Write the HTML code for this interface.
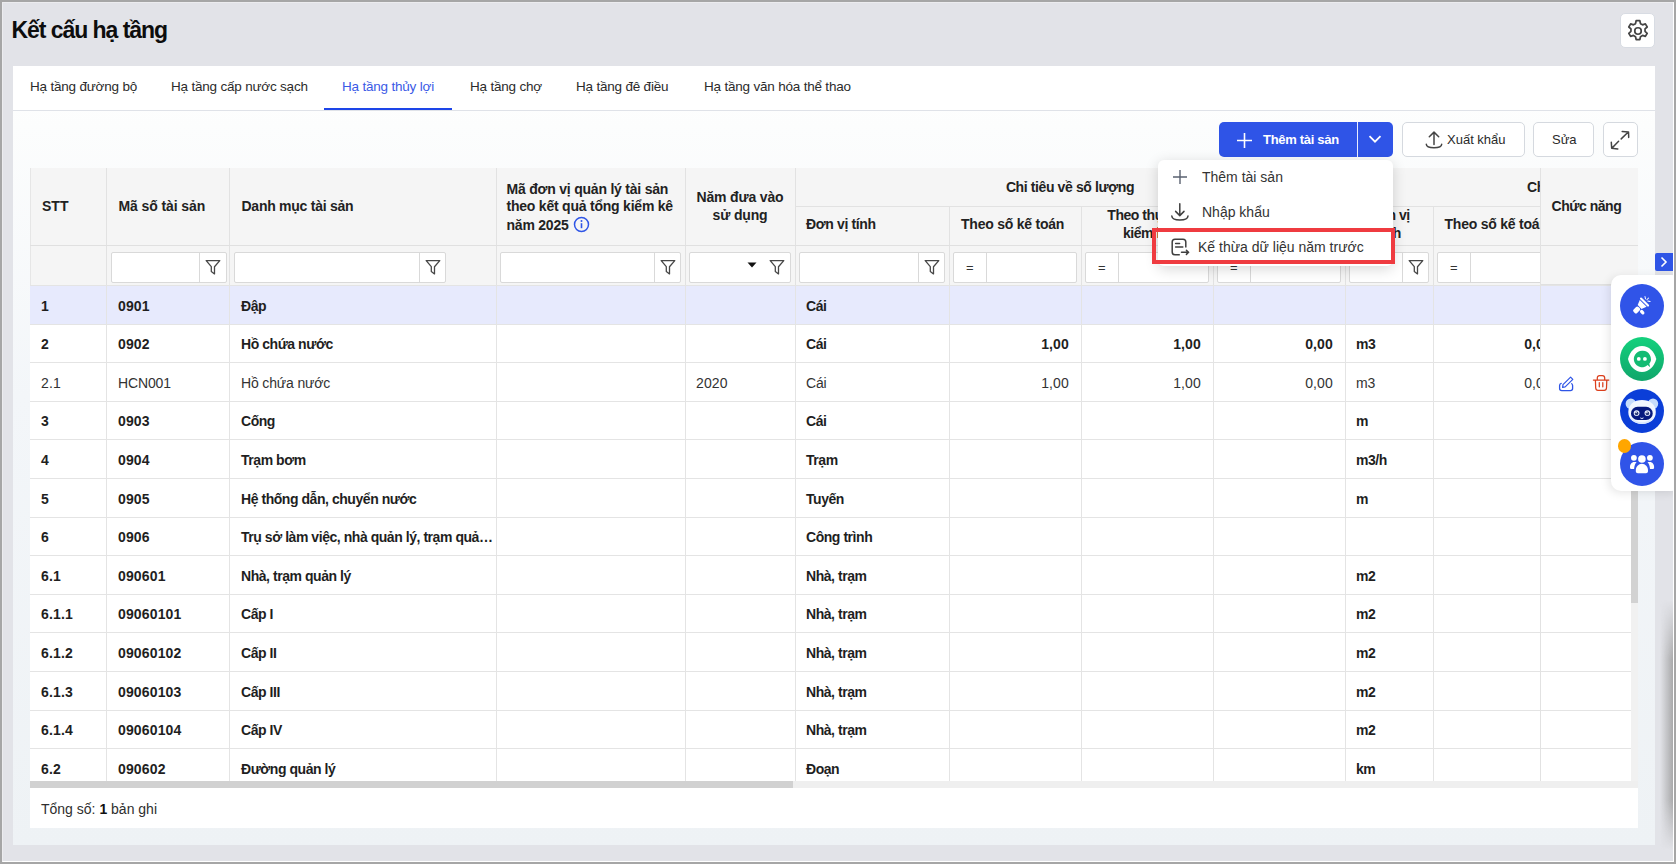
<!DOCTYPE html>
<html><head><meta charset="utf-8"><style>
*{box-sizing:border-box}
html,body{margin:0;padding:0}
body{width:1676px;height:864px;overflow:hidden;position:relative;background:#e2e3e8;font-family:"Liberation Sans",sans-serif;color:#222}
.a{position:absolute}
.ic{position:absolute;display:block}
.t{position:absolute;white-space:nowrap}
.frame{position:absolute;left:0;top:0;width:1676px;height:864px;border:2px solid #a6a6a6;pointer-events:none;z-index:50}
.frame:after{content:"";position:absolute;left:0;top:0;right:0;bottom:0;border-right:1px solid #fff;border-bottom:1px solid #fff;border-left:1px solid #ececef;border-top:1px solid #ececef}
.card{position:absolute;left:13px;top:66px;width:1642px;height:779px;background:linear-gradient(180deg,#fff 0px,#fcfdfd 60px,#f3f6f9 330px,#eef2f5 100%)}
.tabbar{position:absolute;left:0;top:0;width:1642px;height:45px;background:#fff;border-bottom:1px solid #dfe2e8}
.tab{position:absolute;top:0;height:44px;line-height:44px;font-size:13.5px;letter-spacing:-0.2px;color:#2b2b2b;white-space:nowrap}
.btn{position:absolute;top:122px;height:35px;border:1px solid #d5d9df;border-radius:5px;background:#fff;font-size:13px;color:#2a2a2a;line-height:33px;white-space:nowrap}
.hd{position:absolute;background:#f5f5f5;border-right:1px solid #e2e2e2;border-bottom:1px solid #e2e2e2}
.hdt{position:absolute;font-size:14px;font-weight:bold;letter-spacing:-0.45px;color:#222;line-height:17.8px;margin-top:0.5px}
.cell{position:absolute;font-size:14px;line-height:38.6px;white-space:nowrap;overflow:hidden;padding:1.5px 12px 0 11px}
.b{font-weight:bold;letter-spacing:-0.45px;color:#1f1f1f}
.num{letter-spacing:0.15px !important}
.n{font-weight:normal;color:#333;font-size:14px;letter-spacing:-0.15px}
.inp{position:absolute;top:252px;height:31px;background:#fff;border:1px solid #d9d9d9;border-radius:2px}
.menu{position:absolute;left:1158px;top:160px;width:235px;height:106px;background:#fff;border-radius:6px;box-shadow:0 3px 14px rgba(0,0,0,.16);z-index:20}
.mi{position:absolute;font-size:14px;color:#333;white-space:nowrap}
</style></head><body>

<div class="t" style="left:11.5px;top:17px;font-size:23px;line-height:26px;font-weight:bold;color:#0d0d0d;letter-spacing:-1.05px">Kết cấu hạ tầng</div>
<div class="a" style="left:1620px;top:13px;width:35px;height:35px;background:#fff;border:1px solid #d8dce3;border-radius:5px"></div>
<svg class="ic" style="left:1624.6px;top:18.2px" width="26" height="26" viewBox="0 0 24 24"><path fill="none" stroke="#444" stroke-width="1.6" stroke-linejoin="round" d="M10.3 2.5h3.4l.6 2.7 1.9 1.1 2.6-.9 1.7 2.9-2 1.8v2.2l2 1.8-1.7 2.9-2.6-.9-1.9 1.1-.6 2.7h-3.4l-.6-2.7-1.9-1.1-2.6.9-1.7-2.9 2-1.8v-2.2l-2-1.8 1.7-2.9 2.6.9 1.9-1.1z"/><circle cx="12" cy="12" r="3" fill="none" stroke="#444" stroke-width="1.6"/></svg>
<div class="card">
<div class="tabbar">
<div class="tab" style="left:17px;top:-1px;color:#2b2b2b">Hạ tầng đường bộ</div>
<div class="tab" style="left:158px;top:-1px;color:#2b2b2b">Hạ tầng cấp nước sạch</div>
<div class="tab" style="left:329px;top:-1px;color:#3a5ae6">Hạ tầng thủy lợi</div>
<div class="tab" style="left:457px;top:-1px;color:#2b2b2b">Hạ tầng chợ</div>
<div class="tab" style="left:563px;top:-1px;color:#2b2b2b">Hạ tầng đê điều</div>
<div class="tab" style="left:691px;top:-1px;color:#2b2b2b">Hạ tầng văn hóa thể thao</div>
<div class="a" style="left:311px;top:42px;width:128px;height:2px;background:#1d45e8"></div>
</div>
</div>
<div class="a" style="left:1219px;top:122px;width:174px;height:35px;background:#2f54e7;border-radius:5px"></div>
<div class="a" style="left:1357px;top:122px;width:1px;height:35px;background:#e8ecff"></div>
<svg class="ic" style="left:1236px;top:132px" width="17" height="17" viewBox="0 0 17 17"><path d="M8.5 1v15M1 8.5h15" stroke="#fff" stroke-width="1.6"/></svg>
<div class="t" style="left:1263px;top:122px;line-height:35px;font-size:13px;font-weight:bold;color:#fff;letter-spacing:-0.3px">Thêm tài sản</div>
<svg class="ic" style="left:1368px;top:134px" width="14" height="10" viewBox="0 0 14 10"><path d="M1.5 2.2l5.5 5.5 5.5-5.5" fill="none" stroke="#fff" stroke-width="1.8"/></svg>
<div class="btn" style="left:1402px;width:123px"></div>
<svg class="ic" style="left:1425px;top:131px" width="18" height="18" viewBox="0 0 18 18"><path d="M9 1.3v12.2M4.3 5.7L9 1.1l4.7 4.6" fill="none" stroke="#454545" stroke-width="1.5" stroke-linecap="round" stroke-linejoin="round"/><path d="M1.3 13.2C1.4 15.9 3.4 16.7 9 16.7S16.6 15.9 16.7 13.2" fill="none" stroke="#454545" stroke-width="1.5" stroke-linecap="round"/></svg>
<div class="t" style="left:1447px;top:122px;line-height:35px;font-size:13px;color:#2a2a2a">Xuất khẩu</div>
<div class="btn" style="left:1533px;width:61px"></div>
<div class="t" style="left:1552px;top:122px;line-height:35px;font-size:13px;color:#2a2a2a">Sửa</div>
<div class="btn" style="left:1603px;width:35px"></div>
<svg class="ic" style="left:1610px;top:130px" width="20" height="20" viewBox="0 0 20 20"><path d="M12.2 1.5L18.5 1.9L18.7 7.4M18 2.3L11.2 8.9M1.3 12.2L1.7 18.3L7.8 18.9M2.3 17.7L8.6 11.3" fill="none" stroke="#444" stroke-width="1.5" stroke-linecap="round" stroke-linejoin="round"/></svg>
<div class="a" style="left:30px;top:168px;width:1608px;height:620px;overflow:hidden;background:#fff">
<div class="a" style="left:0;top:0;width:1608px;height:117px;background:#f5f5f5"></div>
<div class="a" style="left:0;top:0;width:1px;height:117px;background:#e6e6e6"></div>
<div class="a" style="left:76px;top:0;width:1px;height:117px;background:#e2e2e2"></div>
<div class="a" style="left:199px;top:0;width:1px;height:117px;background:#e2e2e2"></div>
<div class="a" style="left:466px;top:0;width:1px;height:117px;background:#e2e2e2"></div>
<div class="a" style="left:655px;top:0;width:1px;height:117px;background:#e2e2e2"></div>
<div class="a" style="left:765px;top:0;width:1px;height:117px;background:#e2e2e2"></div>
<div class="a" style="left:919px;top:38px;width:1px;height:39px;background:#e2e2e2"></div>
<div class="a" style="left:1051px;top:38px;width:1px;height:39px;background:#e2e2e2"></div>
<div class="a" style="left:1183px;top:38px;width:1px;height:39px;background:#e2e2e2"></div>
<div class="a" style="left:1403px;top:38px;width:1px;height:39px;background:#e2e2e2"></div>
<div class="a" style="left:1534px;top:38px;width:1px;height:39px;background:#e2e2e2"></div>
<div class="a" style="left:919px;top:77px;width:1px;height:40px;background:#e2e2e2"></div>
<div class="a" style="left:1051px;top:77px;width:1px;height:40px;background:#e2e2e2"></div>
<div class="a" style="left:1183px;top:77px;width:1px;height:40px;background:#e2e2e2"></div>
<div class="a" style="left:1315px;top:77px;width:1px;height:40px;background:#e2e2e2"></div>
<div class="a" style="left:1403px;top:77px;width:1px;height:40px;background:#e2e2e2"></div>
<div class="a" style="left:1534px;top:77px;width:1px;height:40px;background:#e2e2e2"></div>
<div class="a" style="left:1315px;top:0;width:1px;height:38px;background:#e2e2e2"></div>
<div class="a" style="left:765px;top:38px;width:843px;height:1px;background:#e2e2e2"></div>
<div class="a" style="left:0;top:77px;width:1608px;height:1px;background:#e0e0e0"></div>
<div class="a" style="left:0;top:117px;width:1608px;height:1px;background:#e4e4e4"></div>
<div class="hdt" style="left:12px;top:29.5px;letter-spacing:0">STT</div>
<div class="hdt" style="left:88.5px;top:29.5px;letter-spacing:-0.1px">Mã số tài sản</div>
<div class="hdt" style="left:211.5px;top:29.5px;letter-spacing:-0.26px">Danh mục tài sản</div>
<div class="hdt" style="left:476.5px;top:12px;letter-spacing:-0.22px">Mã đơn vị quản lý tài sản<br>theo kết quả tổng kiểm kê<br>năm 2025 <svg style="vertical-align:-3.5px;margin-left:1px" width="17" height="17" viewBox="0 0 17 17"><circle cx="8.5" cy="8.5" r="7" fill="none" stroke="#2f55e6" stroke-width="1.5"/><path d="M8.5 7.2v5" stroke="#2f55e6" stroke-width="1.6"/><circle cx="8.5" cy="4.9" r="1" fill="#2f55e6"/></svg></div>
<div class="hdt" style="left:655px;width:110px;text-align:center;top:20.5px;letter-spacing:-0.16px">Năm đưa vào<br>sử dụng</div>
<div class="hdt" style="left:765px;width:550px;text-align:center;top:10px;letter-spacing:-0.39px">Chỉ tiêu về số lượng</div>
<div class="hdt" style="left:776px;top:47.5px;letter-spacing:-0.37px">Đơn vị tính</div>
<div class="hdt" style="left:931px;top:47.5px;letter-spacing:-0.23px">Theo số kế toán</div>
<div class="hdt" style="left:1051px;width:132px;text-align:center;top:38.5px">Theo thực tế<br>kiểm kê</div>
<div class="hdt" style="left:1183px;width:132px;text-align:center;top:47.5px">Chênh lệch</div>
<div class="hdt" style="left:1315px;width:88px;text-align:center;top:38.5px">Đơn vị<br>tính</div>
<div class="hdt" style="left:1414.5px;top:47.5px;letter-spacing:-0.23px">Theo số kế toán</div>
<div class="hdt" style="left:1497px;top:10px">Chỉ tiêu về giá trị</div>
<div class="inp" style="left:81px;top:84px;width:116px"></div><div class="a" style="left:169px;top:84px;width:1px;height:31px;background:#d9d9d9"></div><svg class="ic" style="left:174.5px;top:91.19999999999999px" width="16" height="16" viewBox="0 0 16 16"><path d="M1.2 1.6h13.6l-5.3 6.1v7.2l-3.2-2.4V7.7z" fill="none" stroke="#474747" stroke-width="1.3" stroke-linejoin="round"/></svg>
<div class="inp" style="left:204px;top:84px;width:212px"></div><div class="a" style="left:389px;top:84px;width:1px;height:31px;background:#d9d9d9"></div><svg class="ic" style="left:394.5px;top:91.19999999999999px" width="16" height="16" viewBox="0 0 16 16"><path d="M1.2 1.6h13.6l-5.3 6.1v7.2l-3.2-2.4V7.7z" fill="none" stroke="#474747" stroke-width="1.3" stroke-linejoin="round"/></svg>
<div class="inp" style="left:470px;top:84px;width:181px"></div><div class="a" style="left:624px;top:84px;width:1px;height:31px;background:#d9d9d9"></div><svg class="ic" style="left:629.5px;top:91.19999999999999px" width="16" height="16" viewBox="0 0 16 16"><path d="M1.2 1.6h13.6l-5.3 6.1v7.2l-3.2-2.4V7.7z" fill="none" stroke="#474747" stroke-width="1.3" stroke-linejoin="round"/></svg>
<div class="inp" style="left:659px;top:84px;width:102px"></div><svg class="ic" style="left:738.5px;top:91.19999999999999px" width="16" height="16" viewBox="0 0 16 16"><path d="M1.2 1.6h13.6l-5.3 6.1v7.2l-3.2-2.4V7.7z" fill="none" stroke="#474747" stroke-width="1.3" stroke-linejoin="round"/></svg><svg class="ic" style="left:717px;top:94px" width="10" height="6" viewBox="0 0 10 6"><path d="M0.5 0.5h9L5 5.5z" fill="#111"/></svg>
<div class="inp" style="left:769px;top:84px;width:146px"></div><div class="a" style="left:888px;top:84px;width:1px;height:31px;background:#d9d9d9"></div><svg class="ic" style="left:893.5px;top:91.19999999999999px" width="16" height="16" viewBox="0 0 16 16"><path d="M1.2 1.6h13.6l-5.3 6.1v7.2l-3.2-2.4V7.7z" fill="none" stroke="#474747" stroke-width="1.3" stroke-linejoin="round"/></svg>
<div class="inp" style="left:923px;top:84px;width:124px"></div><div class="a" style="left:956px;top:84px;width:1px;height:31px;background:#d9d9d9"></div><div class="t" style="left:923px;width:33.5px;text-align:center;top:84px;line-height:31px;font-size:13px;color:#333">=</div>
<div class="inp" style="left:1055px;top:84px;width:124px"></div><div class="a" style="left:1088px;top:84px;width:1px;height:31px;background:#d9d9d9"></div><div class="t" style="left:1055px;width:33.5px;text-align:center;top:84px;line-height:31px;font-size:13px;color:#333">=</div>
<div class="inp" style="left:1187px;top:84px;width:124px"></div><div class="a" style="left:1220px;top:84px;width:1px;height:31px;background:#d9d9d9"></div><div class="t" style="left:1187px;width:33.5px;text-align:center;top:84px;line-height:31px;font-size:13px;color:#333">=</div>
<div class="inp" style="left:1319px;top:84px;width:80px"></div><div class="a" style="left:1372px;top:84px;width:1px;height:31px;background:#d9d9d9"></div><svg class="ic" style="left:1377.5px;top:91.19999999999999px" width="16" height="16" viewBox="0 0 16 16"><path d="M1.2 1.6h13.6l-5.3 6.1v7.2l-3.2-2.4V7.7z" fill="none" stroke="#474747" stroke-width="1.3" stroke-linejoin="round"/></svg>
<div class="inp" style="left:1407px;top:84px;width:123px"></div><div class="a" style="left:1440px;top:84px;width:1px;height:31px;background:#d9d9d9"></div><div class="t" style="left:1407px;width:33.5px;text-align:center;top:84px;line-height:31px;font-size:13px;color:#333">=</div>
<div class="a" style="left:0;top:117.0px;width:1608px;height:38.6px;background:#e7eafd;border-top:1px solid #e4e4e4"></div>
<div class="cell b num" style="left:0px;top:117.0px;width:76px;height:38.6px;text-align:left">1</div>
<div class="cell b num" style="left:77px;top:117.0px;width:122px;height:38.6px;text-align:left">0901</div>
<div class="cell b" style="left:200px;top:117.0px;width:266px;height:38.6px;text-align:left;text-overflow:ellipsis;padding-right:2px">Đập</div>
<div class="cell b" style="left:765px;top:117.0px;width:154px;height:38.6px;text-align:left">Cái</div>
<div class="a" style="left:0;top:155.6px;width:1608px;height:38.6px;background:#fff;border-top:1px solid #e4e4e4"></div>
<div class="cell b num" style="left:0px;top:155.6px;width:76px;height:38.6px;text-align:left">2</div>
<div class="cell b num" style="left:77px;top:155.6px;width:122px;height:38.6px;text-align:left">0902</div>
<div class="cell b" style="left:200px;top:155.6px;width:266px;height:38.6px;text-align:left;text-overflow:ellipsis;padding-right:2px">Hồ chứa nước</div>
<div class="cell b" style="left:765px;top:155.6px;width:154px;height:38.6px;text-align:left">Cái</div>
<div class="cell b num" style="left:919px;top:155.6px;width:132px;height:38.6px;text-align:right">1,00</div>
<div class="cell b num" style="left:1051px;top:155.6px;width:132px;height:38.6px;text-align:right">1,00</div>
<div class="cell b num" style="left:1183px;top:155.6px;width:132px;height:38.6px;text-align:right">0,00</div>
<div class="cell b" style="left:1315px;top:155.6px;width:88px;height:38.6px;text-align:left">m3</div>
<div class="cell b num" style="left:1403px;top:155.6px;width:131px;height:38.6px;text-align:right">0,00</div>
<div class="a" style="left:0;top:194.2px;width:1608px;height:38.6px;background:#fff;border-top:1px solid #e4e4e4"></div>
<div class="cell n num" style="left:0px;top:194.2px;width:76px;height:38.6px;text-align:left">2.1</div>
<div class="cell n" style="left:77px;top:194.2px;width:122px;height:38.6px;text-align:left">HCN001</div>
<div class="cell n" style="left:200px;top:194.2px;width:266px;height:38.6px;text-align:left;text-overflow:ellipsis;padding-right:2px">Hồ chứa nước</div>
<div class="cell n num" style="left:655px;top:194.2px;width:110px;height:38.6px;text-align:left">2020</div>
<div class="cell n" style="left:765px;top:194.2px;width:154px;height:38.6px;text-align:left">Cái</div>
<div class="cell n num" style="left:919px;top:194.2px;width:132px;height:38.6px;text-align:right">1,00</div>
<div class="cell n num" style="left:1051px;top:194.2px;width:132px;height:38.6px;text-align:right">1,00</div>
<div class="cell n num" style="left:1183px;top:194.2px;width:132px;height:38.6px;text-align:right">0,00</div>
<div class="cell n" style="left:1315px;top:194.2px;width:88px;height:38.6px;text-align:left">m3</div>
<div class="cell n num" style="left:1403px;top:194.2px;width:131px;height:38.6px;text-align:right">0,00</div>
<div class="a" style="left:0;top:232.8px;width:1608px;height:38.6px;background:#fff;border-top:1px solid #e4e4e4"></div>
<div class="cell b num" style="left:0px;top:232.8px;width:76px;height:38.6px;text-align:left">3</div>
<div class="cell b num" style="left:77px;top:232.8px;width:122px;height:38.6px;text-align:left">0903</div>
<div class="cell b" style="left:200px;top:232.8px;width:266px;height:38.6px;text-align:left;text-overflow:ellipsis;padding-right:2px">Cống</div>
<div class="cell b" style="left:765px;top:232.8px;width:154px;height:38.6px;text-align:left">Cái</div>
<div class="cell b" style="left:1315px;top:232.8px;width:88px;height:38.6px;text-align:left">m</div>
<div class="a" style="left:0;top:271.4px;width:1608px;height:38.6px;background:#fff;border-top:1px solid #e4e4e4"></div>
<div class="cell b num" style="left:0px;top:271.4px;width:76px;height:38.6px;text-align:left">4</div>
<div class="cell b num" style="left:77px;top:271.4px;width:122px;height:38.6px;text-align:left">0904</div>
<div class="cell b" style="left:200px;top:271.4px;width:266px;height:38.6px;text-align:left;text-overflow:ellipsis;padding-right:2px">Trạm bơm</div>
<div class="cell b" style="left:765px;top:271.4px;width:154px;height:38.6px;text-align:left">Trạm</div>
<div class="cell b" style="left:1315px;top:271.4px;width:88px;height:38.6px;text-align:left">m3/h</div>
<div class="a" style="left:0;top:310.0px;width:1608px;height:38.6px;background:#fff;border-top:1px solid #e4e4e4"></div>
<div class="cell b num" style="left:0px;top:310.0px;width:76px;height:38.6px;text-align:left">5</div>
<div class="cell b num" style="left:77px;top:310.0px;width:122px;height:38.6px;text-align:left">0905</div>
<div class="cell b" style="left:200px;top:310.0px;width:266px;height:38.6px;text-align:left;text-overflow:ellipsis;padding-right:2px">Hệ thống dẫn, chuyển nước</div>
<div class="cell b" style="left:765px;top:310.0px;width:154px;height:38.6px;text-align:left">Tuyến</div>
<div class="cell b" style="left:1315px;top:310.0px;width:88px;height:38.6px;text-align:left">m</div>
<div class="a" style="left:0;top:348.6px;width:1608px;height:38.6px;background:#fff;border-top:1px solid #e4e4e4"></div>
<div class="cell b num" style="left:0px;top:348.6px;width:76px;height:38.6px;text-align:left">6</div>
<div class="cell b num" style="left:77px;top:348.6px;width:122px;height:38.6px;text-align:left">0906</div>
<div class="cell b" style="left:200px;top:348.6px;width:266px;height:38.6px;text-align:left;text-overflow:ellipsis;padding-right:2px">Trụ sở làm việc, nhà quản lý, trạm quản lý</div>
<div class="cell b" style="left:765px;top:348.6px;width:154px;height:38.6px;text-align:left">Công trình</div>
<div class="a" style="left:0;top:387.2px;width:1608px;height:38.6px;background:#fff;border-top:1px solid #e4e4e4"></div>
<div class="cell b num" style="left:0px;top:387.2px;width:76px;height:38.6px;text-align:left">6.1</div>
<div class="cell b num" style="left:77px;top:387.2px;width:122px;height:38.6px;text-align:left">090601</div>
<div class="cell b" style="left:200px;top:387.2px;width:266px;height:38.6px;text-align:left;text-overflow:ellipsis;padding-right:2px">Nhà, trạm quản lý</div>
<div class="cell b" style="left:765px;top:387.2px;width:154px;height:38.6px;text-align:left">Nhà, trạm</div>
<div class="cell b" style="left:1315px;top:387.2px;width:88px;height:38.6px;text-align:left">m2</div>
<div class="a" style="left:0;top:425.8px;width:1608px;height:38.6px;background:#fff;border-top:1px solid #e4e4e4"></div>
<div class="cell b num" style="left:0px;top:425.8px;width:76px;height:38.6px;text-align:left">6.1.1</div>
<div class="cell b num" style="left:77px;top:425.8px;width:122px;height:38.6px;text-align:left">09060101</div>
<div class="cell b" style="left:200px;top:425.8px;width:266px;height:38.6px;text-align:left;text-overflow:ellipsis;padding-right:2px">Cấp I</div>
<div class="cell b" style="left:765px;top:425.8px;width:154px;height:38.6px;text-align:left">Nhà, trạm</div>
<div class="cell b" style="left:1315px;top:425.8px;width:88px;height:38.6px;text-align:left">m2</div>
<div class="a" style="left:0;top:464.4px;width:1608px;height:38.6px;background:#fff;border-top:1px solid #e4e4e4"></div>
<div class="cell b num" style="left:0px;top:464.4px;width:76px;height:38.6px;text-align:left">6.1.2</div>
<div class="cell b num" style="left:77px;top:464.4px;width:122px;height:38.6px;text-align:left">09060102</div>
<div class="cell b" style="left:200px;top:464.4px;width:266px;height:38.6px;text-align:left;text-overflow:ellipsis;padding-right:2px">Cấp II</div>
<div class="cell b" style="left:765px;top:464.4px;width:154px;height:38.6px;text-align:left">Nhà, trạm</div>
<div class="cell b" style="left:1315px;top:464.4px;width:88px;height:38.6px;text-align:left">m2</div>
<div class="a" style="left:0;top:503.0px;width:1608px;height:38.6px;background:#fff;border-top:1px solid #e4e4e4"></div>
<div class="cell b num" style="left:0px;top:503.0px;width:76px;height:38.6px;text-align:left">6.1.3</div>
<div class="cell b num" style="left:77px;top:503.0px;width:122px;height:38.6px;text-align:left">09060103</div>
<div class="cell b" style="left:200px;top:503.0px;width:266px;height:38.6px;text-align:left;text-overflow:ellipsis;padding-right:2px">Cấp III</div>
<div class="cell b" style="left:765px;top:503.0px;width:154px;height:38.6px;text-align:left">Nhà, trạm</div>
<div class="cell b" style="left:1315px;top:503.0px;width:88px;height:38.6px;text-align:left">m2</div>
<div class="a" style="left:0;top:541.6px;width:1608px;height:38.6px;background:#fff;border-top:1px solid #e4e4e4"></div>
<div class="cell b num" style="left:0px;top:541.6px;width:76px;height:38.6px;text-align:left">6.1.4</div>
<div class="cell b num" style="left:77px;top:541.6px;width:122px;height:38.6px;text-align:left">09060104</div>
<div class="cell b" style="left:200px;top:541.6px;width:266px;height:38.6px;text-align:left;text-overflow:ellipsis;padding-right:2px">Cấp IV</div>
<div class="cell b" style="left:765px;top:541.6px;width:154px;height:38.6px;text-align:left">Nhà, trạm</div>
<div class="cell b" style="left:1315px;top:541.6px;width:88px;height:38.6px;text-align:left">m2</div>
<div class="a" style="left:0;top:580.2px;width:1608px;height:38.6px;background:#fff;border-top:1px solid #e4e4e4"></div>
<div class="cell b num" style="left:0px;top:580.2px;width:76px;height:38.6px;text-align:left">6.2</div>
<div class="cell b num" style="left:77px;top:580.2px;width:122px;height:38.6px;text-align:left">090602</div>
<div class="cell b" style="left:200px;top:580.2px;width:266px;height:38.6px;text-align:left;text-overflow:ellipsis;padding-right:2px">Đường quản lý</div>
<div class="cell b" style="left:765px;top:580.2px;width:154px;height:38.6px;text-align:left">Đoạn</div>
<div class="cell b" style="left:1315px;top:580.2px;width:88px;height:38.6px;text-align:left">km</div>
<div class="a" style="left:76px;top:117px;width:1px;height:496px;background:#e4e4e4"></div>
<div class="a" style="left:199px;top:117px;width:1px;height:496px;background:#e4e4e4"></div>
<div class="a" style="left:466px;top:117px;width:1px;height:496px;background:#e4e4e4"></div>
<div class="a" style="left:655px;top:117px;width:1px;height:496px;background:#e4e4e4"></div>
<div class="a" style="left:765px;top:117px;width:1px;height:496px;background:#e4e4e4"></div>
<div class="a" style="left:919px;top:117px;width:1px;height:496px;background:#e4e4e4"></div>
<div class="a" style="left:1051px;top:117px;width:1px;height:496px;background:#e4e4e4"></div>
<div class="a" style="left:1183px;top:117px;width:1px;height:496px;background:#e4e4e4"></div>
<div class="a" style="left:1315px;top:117px;width:1px;height:496px;background:#e4e4e4"></div>
<div class="a" style="left:1403px;top:117px;width:1px;height:496px;background:#e4e4e4"></div>
<div class="a" style="left:1534px;top:117px;width:1px;height:496px;background:#e4e4e4"></div>
<div class="a" style="left:1510px;top:0;width:98px;height:613px;background:#fff;border-left:1px solid #e2e2e2"></div>
<div class="a" style="left:1511px;top:0;width:97px;height:117px;background:#f5f5f5;border-bottom:1px solid #e0e0e0"></div>
<div class="a" style="left:1511px;top:77px;width:97px;height:1px;background:#e0e0e0"></div>
<div class="hdt" style="left:1521.5px;top:29.5px;letter-spacing:-0.46px">Chức năng</div>
<div class="a" style="left:1511px;top:117.0px;width:97px;height:38.6px;background:#e7eafd;border-top:1px solid #e4e4e4"></div>
<div class="a" style="left:1511px;top:155.6px;width:97px;height:38.6px;background:#fff;border-top:1px solid #e4e4e4"></div>
<div class="a" style="left:1511px;top:194.2px;width:97px;height:38.6px;background:#fff;border-top:1px solid #e4e4e4"></div>
<div class="a" style="left:1511px;top:232.8px;width:97px;height:38.6px;background:#fff;border-top:1px solid #e4e4e4"></div>
<div class="a" style="left:1511px;top:271.4px;width:97px;height:38.6px;background:#fff;border-top:1px solid #e4e4e4"></div>
<div class="a" style="left:1511px;top:310.0px;width:97px;height:38.6px;background:#fff;border-top:1px solid #e4e4e4"></div>
<div class="a" style="left:1511px;top:348.6px;width:97px;height:38.6px;background:#fff;border-top:1px solid #e4e4e4"></div>
<div class="a" style="left:1511px;top:387.2px;width:97px;height:38.6px;background:#fff;border-top:1px solid #e4e4e4"></div>
<div class="a" style="left:1511px;top:425.8px;width:97px;height:38.6px;background:#fff;border-top:1px solid #e4e4e4"></div>
<div class="a" style="left:1511px;top:464.4px;width:97px;height:38.6px;background:#fff;border-top:1px solid #e4e4e4"></div>
<div class="a" style="left:1511px;top:503.0px;width:97px;height:38.6px;background:#fff;border-top:1px solid #e4e4e4"></div>
<div class="a" style="left:1511px;top:541.6px;width:97px;height:38.6px;background:#fff;border-top:1px solid #e4e4e4"></div>
<div class="a" style="left:1511px;top:580.2px;width:97px;height:38.6px;background:#fff;border-top:1px solid #e4e4e4"></div>
<svg class="ic" style="left:1520px;top:200px" width="70" height="30" viewBox="0 0 70 30"><path d="M11.2 15.4C10.2 15.6 9.6 16.4 9.6 17.5V20.6C9.6 21.9 10.5 22.7 11.8 22.7H20.4C21.7 22.7 22.6 21.9 22.6 20.6V17.5C22.6 16.7 22.3 16.2 21.7 15.6" fill="none" stroke="#2f55e6" stroke-width="1.3" stroke-linecap="round"/><path d="M12.6 19.3L13 16.6L20.6 9.1L22.8 11.3L15.2 18.9Z" fill="none" stroke="#2f55e6" stroke-width="1.2" stroke-linejoin="round"/><path d="M43.4 12.1H58.8M47.3 11.9V10C47.3 8.5 48.2 7.6 49.6 7.6H52.4C53.8 7.6 54.7 8.5 54.7 10V11.9M45.4 12.3L45.7 20C45.8 21.4 46.6 22.3 48 22.3H54.2C55.6 22.3 56.4 21.4 56.5 20L56.8 12.3M49.3 14.5V18.8M52.8 14.5V18.8" fill="none" stroke="#dc3f1c" stroke-width="1.25" stroke-linecap="round" stroke-linejoin="round"/></svg>
<div class="a" style="left:1601px;top:117px;width:7px;height:496px;background:#f1f1f1"></div>
<div class="a" style="left:1601px;top:117px;width:7px;height:318px;background:#d2d2d2"></div>
<div class="a" style="left:0;top:613px;width:1608px;height:7px;background:#efefef"></div>
<div class="a" style="left:0;top:613px;width:763px;height:7px;background:#d1d1d1"></div>
</div>
<div class="a" style="left:30px;top:788px;width:1608px;height:40px;background:#fff"></div>
<div class="t" style="left:41px;top:789px;line-height:40px;font-size:14px;color:#2e2e2e">Tổng số: <b style="color:#111">1</b> bản ghi</div>
<div class="menu">
<svg class="ic" style="left:14px;top:9px" width="16" height="16" viewBox="0 0 16 16"><path d="M8 1v14M1 8h14" stroke="#5a6170" stroke-width="1.4"/></svg>
<div class="mi" style="left:44px;top:0;line-height:34px">Thêm tài sản</div>
<svg class="ic" style="left:14px;top:43px;overflow:visible" width="17" height="18" viewBox="0 0 17 18"><path d="M7.8 0.8v11.8M3.6 8.4l4.2 4.2 4.2-4.2" fill="none" stroke="#3f3f3f" stroke-width="1.5" stroke-linecap="round" stroke-linejoin="round"/><path d="M-0.2 13C0 16 2 17 7.9 17S15.8 16 16 13" fill="none" stroke="#3f3f3f" stroke-width="1.5" stroke-linecap="round"/></svg>
<div class="mi" style="left:44px;top:35px;line-height:34px">Nhập khẩu</div>
<svg class="ic" style="left:13px;top:78px" width="19" height="18" viewBox="0 0 19 18"><path d="M14.8 9.5V4c0-1.6-1.2-2.8-2.8-2.8H4C2.4 1.2 1.2 2.4 1.2 4v10c0 1.6 1.2 2.8 2.8 2.8h4.8" fill="none" stroke="#3f3f3f" stroke-width="1.5"/><path d="M4.6 5.6h4M4.6 9h7.2M10.5 14.3h7M15.4 12.2l2.1 2.1-2.1 2.1" fill="none" stroke="#3f3f3f" stroke-width="1.5" stroke-linecap="round"/></svg>
<div class="mi" style="left:40px;top:70px;line-height:34px">Kế thừa dữ liệu năm trước</div>
</div>
<div class="a" style="left:1152px;top:228px;width:243px;height:36px;border:4px solid #ef3b40;z-index:21"></div>
<div class="a" style="left:1655px;top:253px;width:18px;height:18px;background:#2f55e6;border-radius:2px 0 0 2px;z-index:30"></div>
<svg class="ic" style="left:1659px;top:255.5px;z-index:31" width="10" height="12" viewBox="0 0 10 12"><path d="M2.5 1.5l4.5 4.5-4.5 4.5" fill="none" stroke="#fff" stroke-width="1.6"/></svg>
<div class="a" style="left:1611px;top:275px;width:70px;height:216px;background:#fff;border-radius:10px;box-shadow:-2px 2px 10px rgba(0,0,0,.10);z-index:30"></div>
<div class="a" style="left:1620px;top:284px;width:44px;height:44px;border-radius:50%;background:#3054e8;z-index:31"></div>
<div class="a" style="left:1620px;top:337px;width:44px;height:44px;border-radius:50%;background:linear-gradient(180deg,#14d17d,#10a66b);z-index:31"></div>
<div class="a" style="left:1620px;top:389px;width:44px;height:44px;border-radius:50%;background:#0b3ed8;z-index:31"></div>
<div class="a" style="left:1620px;top:442px;width:44px;height:44px;border-radius:50%;background:#3054e8;z-index:31"></div>
<svg class="ic" style="left:1620px;top:284px;z-index:32" width="44" height="44" viewBox="0 0 44 44"><g transform="translate(24.5 18.1) rotate(-45)" fill="#fff"><rect x="-1" y="-6" width="2.1" height="12" rx="1"/><path d="M-1.9 -4.8L-1.9 4.8L-6.9 2.7L-6.9 -2.7Z"/><rect x="-14.6" y="-2.5" width="6.9" height="5" rx="1.7"/><rect x="-10.3" y="3" width="3.2" height="5" rx="1.6"/></g><g transform="translate(24.5 18.1) rotate(-45)" stroke="#fff" stroke-width="1" stroke-linecap="round"><path d="M3 -1.6L4.3 -3.6M3.3 0H5.8M3 1.6L4.3 3.6"/></g></svg>
<svg class="ic" style="left:1620px;top:337px;z-index:32" width="44" height="44" viewBox="0 0 44 44"><path d="M8 22C10 14.5 15 9.1 22 9.1C29 9.1 34.2 14.5 36.3 22C34.2 29.5 29 34.9 22 34.9C15 34.9 10 29.5 8 22Z" fill="#fff"/><path d="M22 13.8a8.2 8.2 0 1 0 5.6 14.2l2.6 2.2-.9-3.4A8.2 8.2 0 0 0 22 13.8z" fill="#13bb73"/><circle cx="18.8" cy="21.9" r="1.9" fill="#fff"/><circle cx="24.9" cy="21.9" r="1.9" fill="#fff"/></svg>
<svg class="ic" style="left:1620px;top:389px;z-index:32" width="44" height="44" viewBox="0 0 44 44"><circle cx="10.8" cy="14.7" r="5.2" fill="#c6dcfb"/><circle cx="33" cy="14.7" r="5.2" fill="#c6dcfb"/><path d="M8.3 23C8.3 15.5 14 11 22 11S35.8 15.5 35.8 23 30 34.9 22 34.9 8.3 30.5 8.3 23z" fill="#f2f7ff"/><path d="M10 28.5Q22 38 34 28.5Q30 34.9 22 34.9T10 28.5z" fill="#d7e7ff"/><rect x="11" y="17.7" width="21.7" height="13.3" rx="6.6" fill="#06197e"/><circle cx="16.6" cy="24.1" r="2.9" fill="#e9efff"/><circle cx="27.4" cy="24.1" r="2.9" fill="#e9efff"/><circle cx="16.6" cy="24.4" r="1.8" fill="#2a3a7a"/><circle cx="27.4" cy="24.4" r="1.8" fill="#2a3a7a"/><circle cx="16.1" cy="23.5" r=".7" fill="#fff"/><circle cx="26.9" cy="23.5" r=".7" fill="#fff"/><path d="M20.3 28.9Q21.9 30.2 23.5 28.9" stroke="#e9efff" stroke-width="1" fill="none"/></svg>
<svg class="ic" style="left:1620px;top:442px;z-index:32" width="44" height="44" viewBox="0 0 44 44"><circle cx="21.9" cy="17" r="3.8" fill="#fff"/><circle cx="13.9" cy="15.8" r="2.9" fill="#fff"/><circle cx="29.9" cy="15.8" r="2.9" fill="#fff"/><path d="M15.8 28.5C15.8 24.8 18.5 21.8 21.9 21.8S28 24.8 28 28.5V29.2C28 30.3 27.1 31.2 26 31.2H17.8C16.7 31.2 15.8 30.3 15.8 29.2z" fill="#fff"/><path d="M10 24.8C10 22.1 11.8 19.9 14.2 19.9H16.6C15.3 21.4 14.3 23.6 14.1 27H11.6C10.7 27 10 26.3 10 25.4z" fill="#fff"/><path d="M34.1 24.8C34.1 22.1 32.3 19.9 29.9 19.9H27.5C28.8 21.4 29.8 23.6 30 27H32.5C33.4 27 34.1 26.3 34.1 25.4z" fill="#fff"/></svg>
<div class="a" style="left:1617.5px;top:439.3px;width:13.8px;height:13.8px;border-radius:50%;background:#ffa600;z-index:33"></div>
<div class="a" style="left:1660px;top:600px;width:13px;height:250px;background:linear-gradient(90deg,rgba(150,150,150,0),rgba(150,150,150,.75));-webkit-mask-image:linear-gradient(180deg,transparent 0,#000 60px,#000 200px,transparent 250px);z-index:40"></div>
<div class="frame"></div>
</body></html>
